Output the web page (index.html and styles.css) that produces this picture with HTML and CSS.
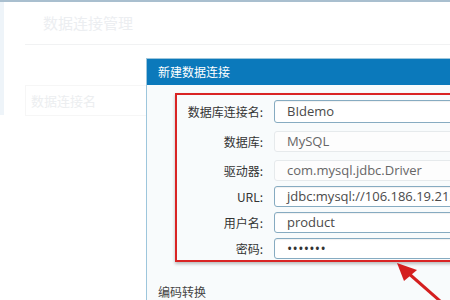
FILE: index.html
```html
<!DOCTYPE html>
<html lang="zh-CN">
<head>
  <meta charset="UTF-8">
  <title>新建数据连接</title>
  <link rel="stylesheet" href="styles.css">
</head>
<body>
  <div class="page">
    <div class="side"></div>
    <div class="main">
      <h2 class="heading">数据连接管理</h2>
      <div class="search">数据连接名</div>
    </div>
  </div>

  <div class="dialog">
    <div class="dialog-head">新建数据连接</div>
    <div class="dialog-body">
      <div class="mark">
        <div class="row first">
          <label>数据库连接名:</label>
          <div class="field">BIdemo</div>
        </div>
        <div class="row first">
          <label>数据库:</label>
          <div class="field off">MySQL</div>
        </div>
        <div class="row">
          <label>驱动器:</label>
          <div class="field off">com.mysql.jdbc.Driver</div>
        </div>
        <div class="row">
          <label>URL:</label>
          <div class="field">jdbc:mysql://106.186.19.21:3306/bidemo</div>
        </div>
        <div class="row">
          <label>用户名:</label>
          <div class="field">product</div>
        </div>
        <div class="row">
          <label>密码:</label>
          <div class="field dots">•••••••</div>
        </div>
      </div>
      <div class="section">编码转换</div>
    </div>
  </div>

  <svg class="arrow" width="450" height="300" viewBox="0 0 450 300">
    <line x1="407" y1="272" x2="448" y2="308" stroke="#d41f1f" stroke-width="3"/>
    <polygon points="397,263 417,270 404,281" fill="#d41f1f"/>
  </svg>
</body>
</html>
```

FILE: styles.css
```css
body{
  margin:0;
  width:450px;
  height:300px;
  overflow:hidden;
  position:relative;
  background:#fff;
  font-family:"Noto Sans CJK SC",sans-serif;
}

.page{
  display:flex;
  height:300px;
  border-top:2px solid #a9bfcf;
  box-sizing:border-box;
}
.side{
  width:4px;
  background:#eef4f9;
  margin-bottom:185px;
}
.main{
  flex:1;
  padding-left:21px;
}
.heading{
  margin:0;
  padding:10px 0 10px 18px;
  font-size:15px;
  font-weight:normal;
  color:#eceef1;
  border-bottom:1px solid #f1f2f3;
  line-height:22px;
}
.search{
  margin-top:40px;
  width:110px;
  padding:5px;
  font-size:13px;
  color:#eceef0;
  border:1px solid #f6f6f6;
}

/* Dialog */
.dialog{
  position:absolute;
  left:146px;
  top:58px;
  width:330px;
  height:260px;
  border:1px solid #9dc6dc;
  background:#f8fbfc;
}
.dialog-head{
  height:26px;
  line-height:25px;
  background:#0b79bb;
  color:#fff;
  font-size:12px;
  padding-left:11px;
}
.dialog-body{
  padding:8px 0 0 28px;
}
.mark{
  border:2px solid #d92424;
  border-right:none;
  padding:5px 0 1px 8px;
  display:flex;
  flex-direction:column;
  gap:5px;
  box-shadow:0 2px 3px rgba(0,0,0,.25);
}
.row{
  display:flex;
  align-items:center;
  gap:11px;
  height:21px;
}
.row.first{
  margin-bottom:3px;
}
.row label{
  flex-shrink:0;
  width:78px;
  text-align:right;
  white-space:nowrap;
  font-size:12px;
  line-height:16px;
  color:#333;
}
.field{
  flex-shrink:0;
  width:200px;
  height:19px;
  line-height:19px;
  padding-left:12px;
  background:#fff;
  border:1px solid #86abc1;
  border-radius:3px;
  box-shadow:inset 0 1px 1px rgba(0,0,0,.06);
  font-family:"Open Sans",sans-serif;
  font-size:13px;
  color:#4a4a4a;
  white-space:nowrap;
  overflow:hidden;
}
.row.first:first-child{
  height:23px;
}
.row.first:first-child .field{
  height:21px;
  line-height:21px;
}
.field.off{
  border-color:#e6eaec;
  background:#fdfdfd;
  box-shadow:none;
  color:#666;
}
.field.dots{
  font-size:14px;
  letter-spacing:0.3px;
  color:#333;
}
.section{
  margin:22px 0 0 -17px;
  font-size:12px;
  line-height:16px;
  color:#444;
}

.arrow{
  position:absolute;
  left:0;
  top:0;
}
```
